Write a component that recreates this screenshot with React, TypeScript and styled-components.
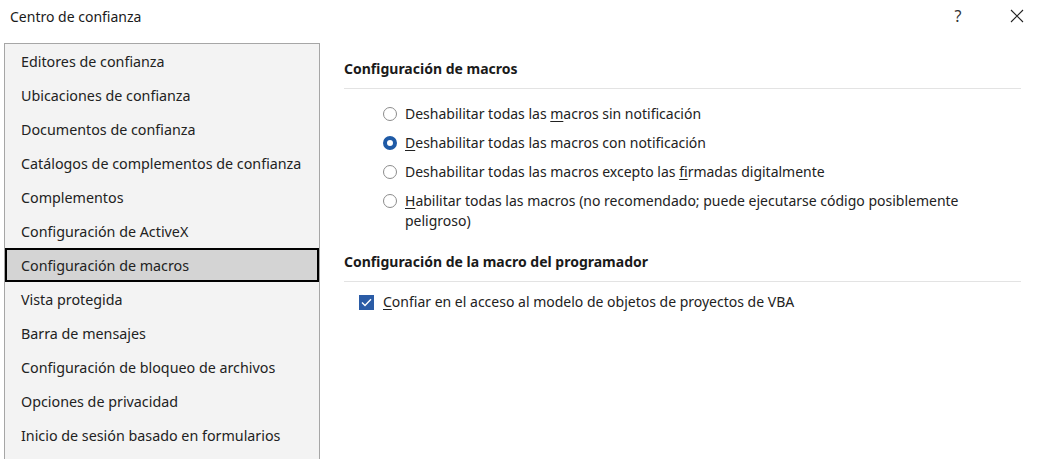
import styled, { createGlobalStyle } from 'styled-components';

const GlobalStyle = createGlobalStyle`
  html, body {
    margin: 0;
    padding: 0;
    background: #ffffff;
  }
  body {
    font-family: 'Noto Sans', 'Open Sans', sans-serif;
    font-size: 14px;
    color: #1a1a1a;
  }
`;

const Window = styled.div`
  width: 1040px;
  height: 459px;
  overflow: hidden;
  display: flex;
  flex-direction: column;
  background: #ffffff;
`;

const TitleBar = styled.div`
  height: 32px;
  display: flex;
  align-items: center;
  padding-left: 10px;
  flex-shrink: 0;
`;

const Title = styled.div`
  flex: 1;
  font-size: 14px;
  color: #1a1a1a;
`;

const TitleButton = styled.button<{ $gap?: number }>`
  width: 46px;
  height: 32px;
  margin-left: ${(p) => p.$gap ?? 0}px;
  border: 0;
  background: transparent;
  display: flex;
  align-items: center;
  justify-content: center;
  color: #333;
  font-family: 'Noto Sans', sans-serif;
  font-size: 16px;
  padding: 0;
`;

const Body = styled.div`
  flex: 1;
  display: flex;
  padding-top: 11px;
  min-height: 0;
`;

const Nav = styled.ul`
  list-style: none;
  margin: 0 0 0 4px;
  padding: 0;
  width: 314px;
  height: 440px;
  background: #f3f3f3;
  border: 1px solid #a6a6a6;
  flex-shrink: 0;
`;

const NavItem = styled.li<{ $active?: boolean }>`
  height: 34px;
  display: flex;
  align-items: center;
  padding-left: 16px;
  box-sizing: border-box;
  font-size: 14.3px;
  color: #222;
  white-space: nowrap;
  ${(p) =>
    p.$active &&
    `
    background: #d4d4d4;
    border: 2px solid #000;
    padding-left: 14px;
  `}
`;

const Content = styled.div`
  flex: 1;
  padding: 16px 19px 0 24px;
`;

const Section = styled.section`
  margin-bottom: 21px;
`;

const Heading = styled.h3`
  margin: 0;
  font-size: 14px;
  font-weight: 700;
  line-height: 20px;
  padding-bottom: 9px;
  border-bottom: 1px solid #e3e3e3;
  color: #1a1a1a;
`;

const Options = styled.div`
  display: flex;
  flex-direction: column;
  gap: 9px;
  padding: 15px 0 0 39px;
`;

const Option = styled.label`
  display: flex;
  align-items: flex-start;
  gap: 8px;
  font-size: 14px;
  line-height: 20px;
  color: #222;
  max-width: 590px;
`;

const Radio = styled.span<{ $checked?: boolean }>`
  width: 14px;
  height: 14px;
  margin-top: 3px;
  box-sizing: border-box;
  border-radius: 50%;
  flex-shrink: 0;
  background: #fff;
  border: ${(p) => (p.$checked ? '4px solid #1f5aa6' : '1px solid #8c8c8c')};
`;

const CheckRow = styled.label`
  display: flex;
  align-items: center;
  gap: 9px;
  padding: 10px 0 0 15px;
  font-size: 14px;
  line-height: 20px;
  color: #222;
`;

const CheckBox = styled.span`
  width: 15px;
  height: 15px;
  background: #2b5ca6;
  display: flex;
  align-items: center;
  justify-content: center;
  flex-shrink: 0;
`;

const Key = styled.span`
  text-decoration: underline;
  text-underline-offset: 2px;
`;

const navItems = [
  'Editores de confianza',
  'Ubicaciones de confianza',
  'Documentos de confianza',
  'Catálogos de complementos de confianza',
  'Complementos',
  'Configuración de ActiveX',
  'Configuración de macros',
  'Vista protegida',
  'Barra de mensajes',
  'Configuración de bloqueo de archivos',
  'Opciones de privacidad',
  'Inicio de sesión basado en formularios',
];

export default function App() {
  return (
    <Window>
      <GlobalStyle />
      <TitleBar>
        <Title>Centro de confianza</Title>
        <TitleButton aria-label="Ayuda">?</TitleButton>
        <TitleButton aria-label="Cerrar" $gap={13}>
          <svg width="14" height="14" viewBox="0 0 14 14">
            <path d="M1 1 L13 13 M13 1 L1 13" stroke="#222" strokeWidth="1.1" fill="none" />
          </svg>
        </TitleButton>
      </TitleBar>
      <Body>
        <Nav>
          {navItems.map((item) => (
            <NavItem key={item} $active={item === 'Configuración de macros'}>
              {item}
            </NavItem>
          ))}
        </Nav>
        <Content>
          <Section>
            <Heading>Configuración de macros</Heading>
            <Options>
              <Option>
                <Radio />
                <span>
                  Deshabilitar todas las <Key>m</Key>acros sin notificación
                </span>
              </Option>
              <Option>
                <Radio $checked />
                <span>
                  <Key>D</Key>eshabilitar todas las macros con notificación
                </span>
              </Option>
              <Option>
                <Radio />
                <span>
                  Deshabilitar todas las macros excepto las <Key>f</Key>irmadas digitalmente
                </span>
              </Option>
              <Option>
                <Radio />
                <span>
                  <Key>H</Key>abilitar todas las macros (no recomendado; puede ejecutarse código
                  posiblemente peligroso)
                </span>
              </Option>
            </Options>
          </Section>
          <Section>
            <Heading>Configuración de la macro del programador</Heading>
            <CheckRow>
              <CheckBox>
                <svg width="11" height="9" viewBox="0 0 11 9">
                  <path d="M1 4.5 L4 7.5 L10 1.2" stroke="#fff" strokeWidth="1.4" fill="none" />
                </svg>
              </CheckBox>
              <span>
                <Key>C</Key>onfiar en el acceso al modelo de objetos de proyectos de VBA
              </span>
            </CheckRow>
          </Section>
        </Content>
      </Body>
    </Window>
  );
}
